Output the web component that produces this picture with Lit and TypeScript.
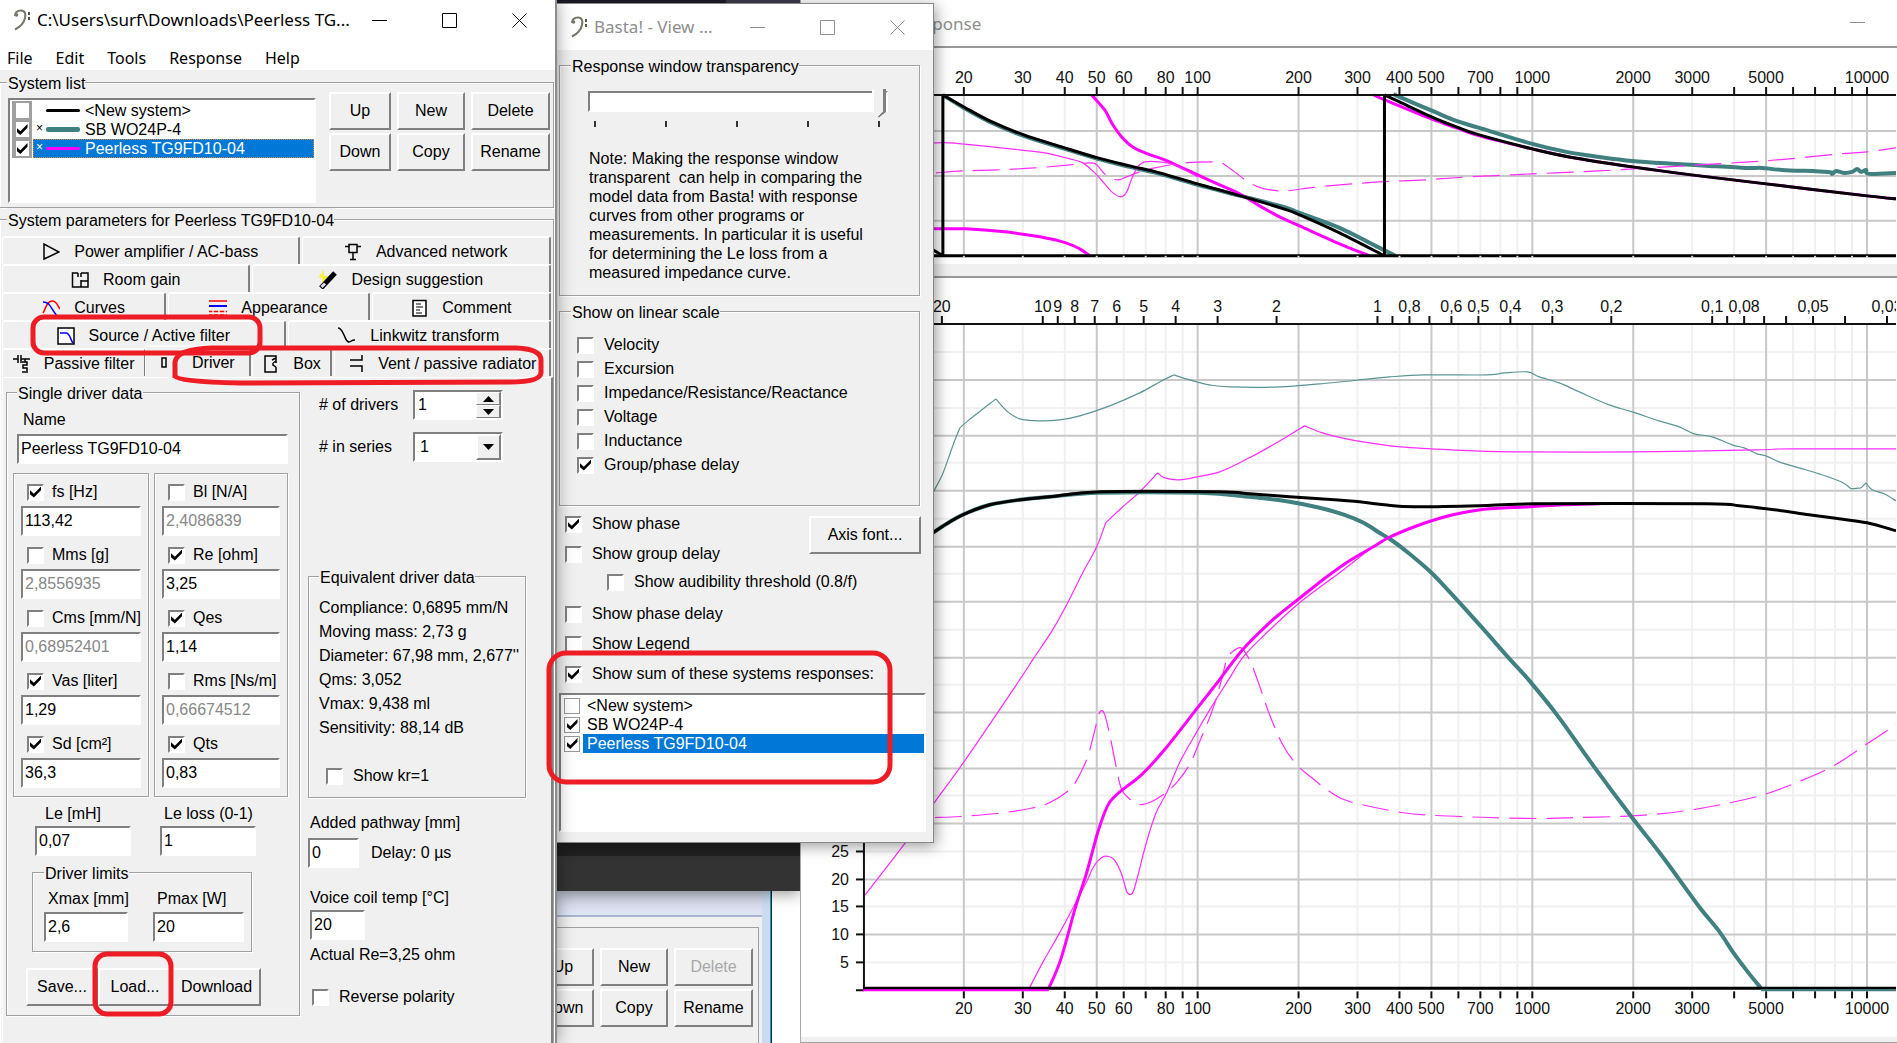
import { LitElement, html, svg, css, nothing } from "lit";
import { customElement } from "lit/decorators.js";
import { classMap } from "lit/directives/class-map.js";

type Pt = [number, number];

/* ---------- chart geometry ---------- */

const DECADE = 335;
const fx = (f: number) => Math.round(1198 + DECADE * Math.log10(f / 100));
const px = (p: number) => Math.round(1043 + DECADE * Math.log10(10 / p));
const MAJOR = [20, 50, 100, 200, 500, 1000, 2000, 5000, 10000];
const MINOR = [30, 40, 60, 70, 80, 90, 300, 400, 600, 700, 800, 900, 3000, 4000, 6000, 7000, 8000, 9000];
const FREQ_LABELS = [20, 30, 40, 50, 60, 80, 100, 200, 300, 400, 500, 700, 1000, 2000, 3000, 5000, 10000];
const PERIODS = [20, 10, 9, 8, 7, 6, 5, 4, 3, 2, 1, 0.9, 0.8, 0.7, 0.6, 0.5, 0.4, 0.3, 0.2, 0.1, 0.09, 0.08, 0.07, 0.06, 0.05, 0.04, 0.03];
const PERIOD_LABELS = [20, 10, 9, 8, 7, 6, 5, 4, 3, 2, 1, 0.8, 0.6, 0.5, 0.4, 0.3, 0.2, 0.1, 0.08, 0.05, 0.03];

/** Smooth path through points; "|" separates pieces that meet in a corner. */
function smooth(data: string): string {
  return data
    .split("|")
    .map((part) => {
      const p = part.trim().split(/\s+/).map((s) => s.split(",").map(Number) as Pt);
      let d = `M${p[0][0]} ${p[0][1]}`;
      for (let i = 0; i < p.length - 1; i++) {
        const a = p[Math.max(0, i - 1)];
        const b = p[i];
        const c = p[i + 1];
        const e = p[Math.min(p.length - 1, i + 2)];
        d += `C${b[0] + (c[0] - a[0]) / 6} ${b[1] + (c[1] - a[1]) / 6} ${c[0] - (e[0] - b[0]) / 6} ${c[1] - (e[1] - b[1]) / 6} ${c[0]} ${c[1]}`;
      }
      return d;
    })
    .join("");
}

const PHASE = {
  teal: "943,95 964,108 990,122 1024,136 1062,148 1098,159 1130,167 1160,174 1198,185 1241,196 1284,207 1300,213 1340,228 1370,243 1396,256|1394,94 1400,97 1433,111 1457,121 1480,128 1533,144 1567,152 1600,157 1633,161 1677,164 1710,166 1747,168 1763,168 1783,170 1829,172 1833,174 1837,171 1845,173 1853,172 1858,169 1862,172 1867,170 1870,174 1897,173",
  magenta: "1092,95 1105,110 1112,123 1122,137 1133,147 1148,154 1165,160 1185,169 1198,175 1220,185 1240,194 1260,206 1280,217 1300,226 1340,244 1370,256|933,229 966,229 1005,232 1040,237 1066,243 1080,249 1090,256|1374,95 1400,106 1432,119 1457,128 1480,136 1533,149 1570,157 1633,167 1692,175 1767,184 1868,196 1897,199",
  black: "943,95 964,107 990,121 1024,135 1062,147 1098,158 1130,166 1160,173 1198,184 1241,196 1284,209 1300,215 1340,233 1385,256|1385,95 1400,102 1432,117 1457,127 1480,135 1533,149 1570,157 1633,167 1692,175 1767,184 1868,196 1897,199|933,250 943,256",
  solid: "933,143 950,143 983,146 1020,150 1045,153 1070,159 1083,163 1095,173 1105,184 1112,192 1121,197 1127,192 1132,179 1138,167 1145,162 1160,162 1175,165 1198,177",
  dashed: "936,173 963,171 997,170 1035,168 1070,165 1090,163 1097,165 1106,175 1118,180 1127,177 1140,172 1155,168 1185,163 1213,162 1222,163 1235,172 1250,183 1265,189 1285,191 1310,188 1340,185 1380,182 1425,180 1470,177 1533,174 1600,171 1650,168 1700,165 1750,162 1790,159 1840,154 1868,152 1897,148",
};

const RESPONSE = {
  tealThin: "933,493 942,476 948,460 954,443 960,428|960,428 968,421 996,399|996,399 1008,412 1020,419 1038,421 1060,420 1080,416 1110,406 1140,393 1160,382 1174,375|1174,375 1190,380 1210,385 1230,387 1280,387 1320,384 1370,379 1390,377 1425,375 1488,375 1505,373 1528,372 1540,377 1560,383 1580,392 1610,405 1633,412 1660,421 1680,427 1695,434 1713,437 1733,445 1745,448 1758,454 1767,456 1780,462 1800,468 1820,474 1842,482 1852,489|1852,489 1862,488|1862,488 1867,483|1867,483 1873,490 1885,494 1897,501",
  magentaTop: "864,897 905,844 933,805 965,761 1020,680 1033,660 1053,630 1068,603 1083,573 1097,547 1106,523|1106,523 1122,508 1140,492 1158,473|1158,473 1165,478 1180,480 1198,477 1220,472 1242,462 1277,443 1305,426|1305,426 1323,433 1347,439 1370,443 1401,447 1452,450 1511,452 1634,452 1757,450 1790,449 1897,449",
  dip: "1030,988 1043,963 1059,935 1074,907 1087,882 1094,867 1102,858 1109,857 1115,861 1122,875 1127,892 1131,895 1134,891 1139,873 1144,853 1150,832 1157,812 1167,793 1180,763 1191,743 1209,712 1229,680 1243,658 1262,638 1300,603 1340,573 1372,548",
  dashed: "935,818 960,817 997,814 1030,809 1050,803 1070,790 1080,775 1088,757 1094,735 1099,715 1102,711 1105,715 1110,735 1116,765 1122,790 1132,801 1140,805 1150,803 1165,794 1177,783 1190,765 1200,742 1213,710 1222,680 1227,660 1233,652 1241,648 1247,655 1253,667 1262,692 1270,715 1283,745 1297,765 1312,778 1330,792 1350,802 1402,813 1437,816 1490,818 1542,819 1577,818 1619,817 1653,815 1688,811 1727,804 1765,795 1800,782 1835,766 1870,743 1897,725",
  teal: "933,533 950,522 965,514 990,505 1020,500 1050,497 1100,493 1200,493 1250,497 1290,502 1320,508 1345,515 1364,523 1380,533 1393,541 1410,554 1432,573 1450,592 1480,625 1510,659 1530,681 1559,717 1594,766 1632,817 1664,858 1699,906 1720,932 1734,953 1749,973 1762,989",
  magenta: "1049,989 1061,960 1076,907 1087,873 1098,833 1107,808 1113,799 1123,790 1142,775 1165,750 1198,708 1220,680 1243,650 1270,623 1283,612 1317,585 1330,575 1350,561 1374,547 1389,538 1415,527 1442,518 1463,513 1490,509 1531,507 1564,505 1600,504",
  black: "933,533 950,522 965,514 990,505 1020,500 1050,497 1100,492 1220,492 1250,494 1290,497 1320,499 1360,502 1385,505 1415,507 1480,506 1535,504 1708,504 1740,506 1775,510 1810,515 1840,519 1868,523 1897,531",
};

const range = (a: number, b: number) => Array.from({ length: b - a + 1 }, (_, i) => a + i);

const verticals = (y1: number, y2: number) => svg`
  ${MINOR.map((f) => svg`<path class="minor" d="M${fx(f)} ${y1}V${y2}"/>`)}
  ${MAJOR.map((f) => svg`<path class="major" d="M${fx(f)} ${y1}V${y2}"/>`)}`;

const phaseChart = () => html`<svg class="chart" viewBox="800 48 1097 216" preserveAspectRatio="xMinYMin slice" role="img" aria-label="Phase">
  ${verticals(95, 256)}
  ${[131, 176, 221].map((y) => svg`<path class="major" d="M864 ${y}H1897"/>`)}
  <path class="c-teal" d=${smooth(PHASE.teal)}></path>
  <path class="c-magenta" d=${smooth(PHASE.magenta)}></path>
  <path class="c-thin" d=${smooth(PHASE.solid)}></path>
  <path class="c-thin dash" d=${smooth(PHASE.dashed)}></path>
  <path class="c-black" d="${smooth(PHASE.black)}M943 95V256M1385 95V256"></path>
  <path class="axis" d="M864 95H1897"></path>
  <path class="base" d="M864 256H1897"></path>
  ${[...MINOR, ...MAJOR].map((f) => svg`<path class="axis" d="M${fx(f)} 87V95"/><path class="notch" d="M${fx(f)} 256V258"/>`)}
  ${FREQ_LABELS.map((f) => svg`<text x=${fx(f)} y="83">${f}</text>`)}
</svg>`;

const responseChart = () => html`<svg class="chart" viewBox="800 278 1097 760" preserveAspectRatio="xMinYMin slice" role="img" aria-label="Response">
  ${range(1, 23).filter((n) => n % 2).map((n) => svg`<path class="minor" d="M864 ${Math.round(990.5 - 27.75 * n)}H1897"/>`)}
  ${verticals(325, 989)}
  ${range(1, 22).filter((n) => n % 2 === 0).map((n) => svg`<path class="major" d="M864 ${Math.round(990.5 - 27.75 * n)}H1897"/>`)}
  <path class="c-thin-teal" d=${smooth(RESPONSE.tealThin)}></path>
  <path class="c-thin" d=${smooth(RESPONSE.magentaTop)}></path>
  <path class="c-thin" d=${smooth(RESPONSE.dip)}></path>
  <path class="c-thin dash" d=${smooth(RESPONSE.dashed)}></path>
  <path class="c-teal" d=${smooth(RESPONSE.teal)}></path>
  <path class="c-magenta" d=${smooth(RESPONSE.magenta)}></path>
  <path class="c-black" d=${smooth(RESPONSE.black)}></path>
  <path class="axis" d="M864 324H1897M864 324V991M856 991H864"></path>
  <path class="base" d="M863 989H1897"></path>
  <path class="under-magenta" d="M863 991H1049"></path>
  <path class="under-teal" d="M1762 991H1897"></path>
  ${PERIODS.map((p) => svg`<path class="axis" d="M${px(p)} 316V324"/>`)}
  ${PERIOD_LABELS.map((p) => svg`<text x=${px(p)} y="312">${String(p).replace(".", ",")}</text>`)}
  ${[...MINOR, ...MAJOR].map((f) => svg`<path class="axis" d="M${fx(f)} 992V999"/>`)}
  ${FREQ_LABELS.map((f) => svg`<text x=${fx(f)} y="1015">${f}</text>`)}
  ${[5, 10, 15, 20, 25].map((v) => {
    const y = Math.round(990.5 - 5.55 * v);
    return svg`<path class="axis" d="M856 ${y}H864"/><text class="end" x="849" y=${y + 6}>${v}</text>`;
  })}
</svg>`;

/* ---------- icons ---------- */

const clef = html`<svg class="clef" viewBox="0 0 18 22" aria-hidden="true">
  <path d="M2 7C2 3 5 1.500 8 1.500C12 1.500 13 5 12 9C11 14 7 18 2 20.500" fill="none" stroke="#77776a" stroke-width="2"/>
  <circle cx="3.500" cy="6" r="1.800" fill="#77776a"/>
  <path d="M15 3h2v3h-2zM15 8h2v3h-2z" fill="#55554a"/>
</svg>`;

const icons: Record<string, unknown> = {
  amp: svg`<path d="M2 1V16L17 9Z" fill="none" stroke="#000" stroke-width="1.500"/>`,
  network: svg`<path d="M5 1.500H13V9.500H5ZM1 3.500H5M13 3.500H17M9 9V16M6 16.500H12" fill="none" stroke="#000" stroke-width="1.500"/>`,
  room: svg`<path d="M7 2H1.500V16H17V12M7 2V6M10 2H17V8M10 2V6M10 9V16M10 10H17M17 8V12" fill="none" stroke="#000" stroke-width="1.500"/>`,
  wand: svg`<path d="M4 0V11M0 6H9M1 3L7 9" stroke="#ffee20" stroke-width="1.500"/><path d="M2 17L16 2" stroke="#000" stroke-width="5"/><path d="M2.500 16L6 12.500" stroke="#ddd" stroke-width="3"/>`,
  curves: svg`<path d="M1 14C4 9 5 2 10 2C15 2 15 6 18 10" fill="none" stroke="#f00" stroke-width="1.500"/><path d="M1 3C8 3 8 8 15 17" fill="none" stroke="#00f" stroke-width="1.500"/>`,
  lines: svg`<path d="M0 2H18M0 12.500H18M0 16H18" stroke="#f00" stroke-width="1.500"/><path d="M4 11V18M10 11V18M16 11V18" stroke="#f0f0f0" stroke-width="1.500"/><path d="M0 7H18" stroke="#00f" stroke-width="2"/>`,
  comment: svg`<path d="M3 1.500H16V17H3Z" fill="#fff" stroke="#000" stroke-width="1.500"/><path d="M6 5H11M6 8H13M6 11H10M6 14H12" stroke="#000"/>`,
  filter: svg`<path d="M1 1H17V17H1Z" fill="#fff" stroke="#000" stroke-width="1.500"/><path d="M3 6H9C13 6 13 12 16 16" fill="none" stroke="#00f" stroke-width="1.500"/>`,
  linkwitz: svg`<path d="M0 1C3 1 4 4 6 8C8 12 8 15 11 15C13 15 13 13 17 13" fill="none" stroke="#000" stroke-width="1.500"/>`,
  passive: svg`<path d="M0 4H5M5 0V8M8 0V8M8 4H17M12 4V7M9 7H14V10H10V13H14V16M9 17H15" fill="none" stroke="#000" stroke-width="1.500"/>`,
  driver: svg`<path d="M1 4H5V13H1Z" fill="none" stroke="#000" stroke-width="1.500"/>`,
  box: svg`<path d="M14 8V1H3V17H14V12M14 3L10 5M14 6L11 8M11 8V10L14 12" fill="none" stroke="#000" stroke-width="1.500"/>`,
  vent: svg`<path d="M3 5H15V0M3 11H15V17" fill="none" stroke="#000" stroke-width="1.500"/>`,
};
const icon = (name: string) => html`<svg class="ico" viewBox="0 0 18 18" aria-hidden="true">${icons[name]}</svg>`;

const controls = () => html`<div class="controls">
  <button aria-label="Minimize"><svg viewBox="0 0 16 16"><path d="M0 8.500H15"/></svg></button>
  <button aria-label="Maximize"><svg viewBox="0 0 16 16"><path d="M.5 1.500H14.500V15.500H.5Z"/></svg></button>
  <button aria-label="Close"><svg viewBox="0 0 16 16"><path d="M.5 1.500L14.500 15.500M14.500 1.500L.5 15.500"/></svg></button>
</div>`;

/* ---------- data ---------- */

interface TabDef { icon: string; label: string; active?: boolean }
const TABS: { cls: string; tabs: TabDef[] }[] = [
  { cls: "r1", tabs: [{ icon: "amp", label: "Power amplifier / AC-bass" }, { icon: "network", label: "Advanced network" }] },
  { cls: "r2", tabs: [{ icon: "room", label: "Room gain" }, { icon: "wand", label: "Design suggestion" }] },
  { cls: "r3", tabs: [{ icon: "curves", label: "Curves" }, { icon: "lines", label: "Appearance" }, { icon: "comment", label: "Comment" }] },
  { cls: "r4", tabs: [{ icon: "filter", label: "Source / Active filter" }, { icon: "linkwitz", label: "Linkwitz transform" }] },
  { cls: "r5", tabs: [{ icon: "passive", label: "Passive filter" }, { icon: "driver", label: "Driver", active: true }, { icon: "box", label: "Box" }, { icon: "vent", label: "Vent / passive radiator" }] },
];

type Param = [label: string, value: string, on: boolean];
const LEFT: Param[] = [
  ["fs [Hz]", "113,42", true],
  ["Mms [g]", "2,8556935", false],
  ["Cms [mm/N]", "0,68952401", false],
  ["Vas [liter]", "1,29", true],
  ["Sd [cm²]", "36,3", true],
];
const RIGHT: Param[] = [
  ["Bl [N/A]", "2,4086839", false],
  ["Re [ohm]", "3,25", true],
  ["Qes", "1,14", true],
  ["Rms [Ns/m]", "0,66674512", false],
  ["Qts", "0,83", true],
];
const SYSTEMS = [
  { name: "<New system>", on: false, star: false, line: "k" },
  { name: "SB WO24P-4", on: true, star: true, line: "t" },
  { name: "Peerless TG9FD10-04", on: true, star: true, line: "m" },
];

const check = (label: string, on = false, cls = "") => html`<label class="check ${cls}"><input type="checkbox" .checked=${on} />${label}</label>`;

const params = (list: Param[]) => html`<div class="params">
  ${list.map(([label, value, on]) => html`<div class="param">
    ${check(label, on)}
    <input class="field" aria-label="${label} value" .value=${value} ?disabled=${!on} />
  </div>`)}
</div>`;

const field = (label: string, value: string, cls = "") => html`<label class="stack ${cls}"><span>${label}</span><input class="field" .value=${value} /></label>`;

@customElement("app-root")
export class AppRoot extends LitElement {
  static styles = css`
    :host { display: block; position: relative; min-height: 100vh; overflow: hidden; background: #fff; color: #000;
      font: 16px/20px "Liberation Sans", Arial, sans-serif; }
    * { box-sizing: border-box; }
    button, input, select { font: inherit; color: inherit; margin: 0; }
    button { padding: 0; }
    fieldset { margin: 0; padding: 0; min-width: 0; border: 1px solid #a0a0a0; box-shadow: 1px 1px 0 #fff, inset 1px 1px 0 #fff; }
    legend { padding: 3px 0 0 1px; background: #f0f0f0; line-height: 20px; }
    .win { position: absolute; background: #f0f0f0; display: flex; flex-direction: column; }

    .bar { display: flex; align-items: center; background: #fff; font: 17px/24px "Noto Sans", "Open Sans", sans-serif; flex: none; }
    .bar h1 { font: inherit; margin: 0 0 0 6px; flex: 1; white-space: nowrap; min-width: 0; }
    .clef { width: 18px; height: 22px; margin-left: 13px; flex: none; }
    .controls { display: flex; flex: none; align-self: stretch; }
    .controls button { width: 70px; border: 0; background: none; display: grid; place-items: center; }
    .controls svg { width: 16px; height: 16px; fill: none; stroke: currentColor; }

    .push { background: #f0f0f0; border: 2px solid; border-color: #fff #808080 #808080 #fff; }
    .push:disabled { color: #a8a8a8; }
    .check { display: flex; align-items: center; gap: 10px; white-space: nowrap; }
    .check input, .tick { appearance: none; width: 17px; height: 17px; flex: none; background: #fff; display: grid; place-items: center;
      border: 2px solid; border-color: #808080 #fff #fff #808080; }
    .check input:checked::before, .tick:checked::before { content: ""; width: 11px; height: 11px; background: #000;
      clip-path: polygon(0 35%, 35% 65%, 100% 0, 100% 35%, 35% 100%, 0 70%); }
    .field { width: 100%; height: 30px; background: #fff; border: 2px solid; border-color: #808080 #fff #fff #808080; border-radius: 0; padding: 0 2px 1px; outline: 0; min-width: 0; }
    .field:disabled { color: #888; }
    .list { background: #fff; border: 2px solid; border-color: #808080 #fff #fff #808080; margin: 0; padding: 0; list-style: none; }

    /* main window */
    .main { left: 0; top: 0; bottom: 0; width: 557px; z-index: 3; border-right: 2px solid #8c8c8c; box-shadow: 0 0 16px rgba(0, 0, 0, 0.4); }
    .main .bar { height: 39px; }
    .menu { display: flex; gap: 23px; height: 31px; padding: 7px 7px 0; background: #fff; font: 16px/24px "Noto Sans", "Open Sans", sans-serif; align-items: center; }
    .menu button { border: 0; background: none; }
    .sys { margin: 1px 1px 0 0; border-left: 0; padding-bottom: 4px; }
    .sys legend, .par legend.top { margin-left: 7px; }
    .sys-in { display: flex; align-items: flex-start; justify-content: space-between; padding: 0 3px 0 8px; }
    .sys-in .list { width: 308px; min-height: 105px; margin-top: 4px; padding: 1px 0 0 2px; }
    .sys-row { display: flex; height: 19px; }
    .sys-row .cell { width: 20px; background: #a0a0a0; display: grid; place-items: center; flex: none; }
    .cell .tick { width: 13px; height: 15px; border: 0; }
    .sys-row .body { flex: 1; display: flex; align-items: center; margin-left: 1px; padding-left: 2px; border: 1px solid transparent; line-height: 17px; }
    .sys-row .star { width: 9px; align-self: flex-start; font-size: 12px; line-height: 14px; }
    .swatch { width: 34px; height: 3px; margin: 0 5px 0 1px; border-radius: 2px; background: #000; }
    .swatch.t { height: 5px; background: #408080; }
    .swatch.m { background: #f0f; }
    .sel { background: #0078d7; color: #fff; }
    .sys-row .body.sel { border: 1px dotted #d58a3c; }
    .btns { display: grid; grid-template-columns: 62px 68px 79px; grid-auto-rows: 38px; gap: 3px 6px; }
    .sys-in .btns { margin-top: -2px; }

    .par { flex: 1; margin-right: 1px; border-left: 0; border-bottom: 0; }
    .par-in { padding: 5px 0 0 2px; }
    .tabs { display: grid; grid-auto-rows: 28px; padding-right: 2px; }
    .trow { display: grid; gap: 2px; }
    .r1 { grid-template-columns: 297fr 249fr; }
    .r2 { grid-template-columns: 248fr 298fr; }
    .r3 { grid-template-columns: 164fr 201fr 179fr; }
    .r4 { grid-template-columns: 283fr 263fr; }
    .r5 { grid-template-columns: 144fr 102fr 79fr 217fr; }
    .tab { display: flex; align-items: center; justify-content: center; gap: 14px; background: #f0f0f0; border: 0 solid; border-width: 2px 2px 0 1px;
      border-color: #fff #808080 #fff #fff; border-radius: 3px 3px 0 0; white-space: nowrap; min-width: 0; padding-top: 2px; }
    .tab.active { margin: -3px -1px 0 -3px; padding-top: 2px; border-top-color: #f8f8f8; }
    .ico { width: 18px; height: 18px; flex: none; }
    .r5 .tab { gap: 13px; }
    .page { margin-top: 1px; border-top: 1px solid #fff; border-left: 1px solid #fff; border-right: 2px solid #808080; display: flex; gap: 8px; padding: 3px 0 30px 3px; }
    .single { width: 294px; flex: none; padding-bottom: 9px; }
    .single > legend { margin-left: 10px; }
    .single-in { padding: 6px 11px 0 6px; }
    .name { padding: 0 0 0 4px; }
    .stack { display: flex; flex-direction: column; }
    .name span { margin: 0 0 4px 6px; }
    .cols { display: grid; grid-template-columns: 136px 134px; gap: 5px; margin-top: 9px; }
    .params { border: 1px solid #a0a0a0; box-shadow: 1px 1px 0 #fff, inset 1px 1px 0 #fff; display: flex; flex-direction: column; gap: 9px; padding: 8px 7px; }
    .param { display: flex; flex-direction: column; gap: 4px; }
    .param .check { height: 20px; padding-left: 6px; gap: 8px; margin-right: -7px; }
    .pair { display: grid; grid-template-columns: 96px 96px; gap: 29px; margin: 7px 0 0 22px; }
    .pair span { padding-left: 4px; margin-bottom: 2px; white-space: nowrap; }
    .pair .stack:first-child span { padding-left: 10px; }
    .limits { margin: 5px 36px 0 19px; padding: 5px 10px 9px 11px; }
    .limits-in { display: grid; grid-template-columns: 84px 91px; gap: 25px; }
    .limits span { padding-left: 4px; margin-bottom: 3px; white-space: nowrap; }
    .acts { display: flex; margin: 16px 0 0 13px; }
    .acts .push { height: 38px; width: 72px; }
    .acts .push:nth-child(2) { width: 74px; }
    .acts .push:nth-child(3) { width: 89px; }

    .side { flex: 1; display: flex; flex-direction: column; padding-top: 9px; min-width: 0; }
    .nums { display: grid; grid-template-columns: 94px 90px; grid-auto-rows: 30px; row-gap: 12px; align-items: center; padding-left: 11px; }
    .combo { display: grid; grid-template-columns: 1fr 25px; background: #fff; border: 2px solid; border-color: #808080 #fff #fff #808080; height: 30px; }
    .combo input, .combo select { border: 0; outline: 0; background: none; width: 100%; min-width: 0; padding: 0 3px; appearance: none; }
    .combo select { grid-area: 1 / 1 / 2 / 3; padding: 0 5px; }
    .combo .drop { grid-area: 1 / 2; pointer-events: none; display: grid; place-items: center; }
    .spin { display: grid; grid-template-rows: 1fr 1fr; }
    .spin button { display: grid; place-items: center; border-width: 1px 2px 1px 1px; }
    .arr { width: 11px; height: 6px; }
    .equiv { width: 218px; margin-top: 103px; padding-bottom: 11px; }
    .equiv legend { margin-left: 10px; }
    .equiv p { margin: 0 0 0 10px; line-height: 24px; white-space: nowrap; }
    .equiv .lines { padding-top: 8px; }
    .equiv .check { margin: 26px 0 0 17px; }
    .side .lab { margin: 15px 0 5px 2px; display: block; }
    .row { display: flex; align-items: center; gap: 12px; }
    .row .field { width: 51px; }
    .side .lab.second { margin: 20px 0 2px 2px; }
    .temp { width: 55px; margin-left: 2px; }
    .side .actual { margin: 5px 0 22px 2px; }
    .side > .check { padding-left: 4px; }

    /* view window */
    .view { left: 557px; top: 3px; width: 377px; z-index: 2; border: 1px solid #888; border-left: 0; box-shadow: 2px 3px 14px rgba(0, 0, 0, 0.4); padding-bottom: 10px; }
    .view .bar, .response .bar { color: #8e8e8e; }
    .view .bar { height: 46px; }
    .view-in { padding: 4px 8px 0 2px; }
    .view-in fieldset { width: 361px; }
    .view-in legend { margin-left: 11px; }
    .trans { padding-bottom: 13px; }
    .trans-in { padding: 9px 31px 0 28px; }
    .slider { appearance: none; width: 100%; height: 30px; margin: 0; display: block; background: none; }
    .slider::-webkit-slider-runnable-track { height: 21px; background: #fff; border: 2px solid; border-color: #808080 #fff #fff #808080; }
    .slider::-webkit-slider-thumb { appearance: none; width: 14px; height: 29px; margin-top: -4px;
      background: linear-gradient(139deg, transparent 79%, #808080 79%), linear-gradient(90deg, #fff 2px, #f0f0f0 2px 11px, #808080 11px);
      clip-path: polygon(0 0, 100% 0, 100% 80%, 50% 100%, 0 80%); }
    .marks { display: flex; justify-content: space-between; padding: 5px 8px 0 6px; height: 11px; }
    .marks i { width: 2px; background: #333; }
    .note { margin: 22px -20px 0 1px; line-height: 19px; }
    .note p { margin: 0; white-space: pre; }
    .linear { margin-top: 4px; padding-bottom: 28px; }
    .linear-in { padding: 10px 0 0 17px; }
    .linear .check { height: 24px; }
    .opts { display: grid; grid-template-columns: 1fr 112px; grid-auto-rows: 30px; margin-top: 3px; padding: 0 4px 0 6px; }
    .opts .check { grid-column: 1 / -1; }
    .opts .check.short { grid-column: 1; }
    .opts .indent { padding-left: 42px; height: 26px; }
    .opts .push { grid-area: 1 / 2 / 3 / 3; margin-top: 7px; height: 38px; }
    .view .list { margin: 4px -1px 0 0; min-height: 139px; padding: 1px 0 0 3px; }
    .view .list label { display: flex; gap: 3px; height: 19px; align-items: center; }
    .view .list span { flex: 1; padding-left: 4px; line-height: 19px; }
    .view .list .tick { border: 1px solid #999; width: 16px; height: 16px; }

    /* desktop behind */
    .strip { position: absolute; left: 556px; top: 0; width: 244px; height: 4px; background: linear-gradient(90deg, #1b1c27 170px, #3d3d4b 170px); }
    .dark { position: absolute; left: 556px; top: 830px; width: 244px; height: 61px; background: linear-gradient(#212121 26px, #333 26px); box-shadow: 0 3px 14px rgba(0, 0, 0, 0.4); z-index: 1; }
    .back { left: 500px; top: 860px; bottom: 0; width: 270px; border: solid #c9dcf0; border-width: 0 8px 0 0; box-shadow: 1px 0 0 #0aa5c8, 2px 0 0 #222; }
    .back .cap { height: 57px; background: linear-gradient(#d0d4e4 31px, #dfe5f5); border-bottom: 2px solid #a9b4d0; flex: none; }
    .back .panel { margin: 10px 3px 0 0; flex: 1; border: 1px solid #a0a0a0; border-width: 1px 1px 0 0; padding: 20px 5px 0 0; display: flex; justify-content: flex-end; }
    .back .btns { grid-template-columns: 62px 68px 79px; align-content: start; }

    /* response window */
    .response { left: 800px; right: 0; top: 0; bottom: 0; background: #fff; z-index: 1; border-left: 1px solid #aaa; }
    .desk { z-index: 0; }
    .response .bar { height: 46px; padding: 2px 19px 0 103px; justify-content: space-between; }
    .response .bar h1 { margin: 0; }
    .response .bar .mini { border: 0; background: none; width: 40px; display: grid; place-items: center; color: #8e8e8e; }
    .mini svg { width: 16px; height: 16px; stroke: currentColor; }
    .response .rule { border-top: 2px solid #999; }
    .chart { display: block; width: 100%; margin-left: -1px; flex: none; }
    .split { height: 12px; background: #f0f0f0; flex: none; }
    .foot { flex: 1; background: #f0f0f0; border-bottom: 1px solid #a0a0a0; }
    .chart text { font: 16px "Liberation Sans", Arial, sans-serif; text-anchor: middle; fill: #111; }
    .chart text.end { text-anchor: end; }
    .chart path { fill: none; }
    .major { stroke: #c8c8c8; stroke-width: 2; }
    .minor { stroke: #f0f0f0; stroke-width: 2; }
    .axis { stroke: #111; stroke-width: 2; }
    .base { stroke: #000; stroke-width: 3; }
    .notch { stroke: #ddd; stroke-width: 2; }
    .c-teal { stroke: #408080; stroke-width: 4; }
    .c-magenta { stroke: #f0f; stroke-width: 3; }
    .c-black { stroke: #000; stroke-width: 3; }
    .c-thin { stroke: #ff2cff; stroke-width: 1.2; }
    .c-thin-teal { stroke: #5c9494; stroke-width: 1.2; }
    .dash { stroke-dasharray: 27 10; }
    .under-magenta { stroke: #f0f; stroke-width: 2; }
    .under-teal { stroke: #408080; stroke-width: 2; }

    .marksup { position: absolute; inset: 0; width: 100%; height: 100%; z-index: 5; pointer-events: none; fill: none; stroke: #ee1c25; stroke-width: 5; }
  `;

  private mainWindow() {
    return html`<section class="win main">
      <header class="bar">${clef}<h1>C:\\Users\\surf\\Downloads\\Peerless TG...</h1>${controls()}</header>
      <nav class="menu">${["File", "Edit", "Tools", "Response", "Help"].map((m) => html`<button>${m}</button>`)}</nav>
      <fieldset class="sys">
        <legend>System list</legend>
        <div class="sys-in">
          <ul class="list">
            ${SYSTEMS.map((s, i) => html`<li class="sys-row">
              <span class="cell"><input class="tick" type="checkbox" aria-label=${s.name} .checked=${s.on} /></span>
              <span class=${classMap({ body: true, sel: i === 2 })}><span class="star">${s.star ? "×" : nothing}</span><i class="swatch ${s.line}"></i>${s.name}</span>
            </li>`)}
          </ul>
          <div class="btns">${["Up", "New", "Delete", "Down", "Copy", "Rename"].map((b) => html`<button class="push">${b}</button>`)}</div>
        </div>
      </fieldset>
      <fieldset class="par">
        <legend class="top">System parameters for Peerless TG9FD10-04</legend>
        <div class="par-in">
          <div class="tabs" role="tablist">
            ${TABS.map((r) => html`<div class="trow ${r.cls}">
              ${r.tabs.map((t) => html`<button role="tab" aria-selected=${t.active ? "true" : "false"} class=${classMap({ tab: true, active: !!t.active })}>${icon(t.icon)}${t.label}</button>`)}
            </div>`)}
          </div>
          ${this.driverPage()}
        </div>
      </fieldset>
    </section>`;
  }

  private driverPage() {
    return html`<div class="page">
      <fieldset class="single">
        <legend>Single driver data</legend>
        <div class="single-in">
          ${field("Name", "Peerless TG9FD10-04", "name")}
          <div class="cols">${params(LEFT)}${params(RIGHT)}</div>
          <div class="pair">${field("Le [mH]", "0,07")}${field("Le loss (0-1)", "1")}</div>
          <fieldset class="limits">
            <legend>Driver limits</legend>
            <div class="limits-in">${field("Xmax [mm]", "2,6")}${field("Pmax [W]", "20")}</div>
          </fieldset>
          <div class="acts"><button class="push">Save...</button><button class="push">Load...</button><button class="push">Download</button></div>
        </div>
      </fieldset>
      <div class="side">
        <div class="nums">
          <label for="count"># of drivers</label>
          <div class="combo"><input id="count" value="1" />
            <span class="spin">
              <button class="push" aria-label="More"><svg class="arr" viewBox="0 0 11 6"><path d="M0 6H11L5.500 0Z"/></svg></button>
              <button class="push" aria-label="Fewer"><svg class="arr" viewBox="0 0 11 6"><path d="M0 0H11L5.500 6Z"/></svg></button>
            </span>
          </div>
          <label for="series"># in series</label>
          <div class="combo"><select id="series"><option>1</option></select><span class="push drop"><svg class="arr" viewBox="0 0 11 6"><path d="M0 0H11L5.500 6Z"/></svg></span></div>
        </div>
        <fieldset class="equiv">
          <legend>Equivalent driver data</legend>
          <div class="lines">
            ${["Compliance: 0,6895 mm/N", "Moving mass: 2,73 g", "Diameter: 67,98 mm, 2,677''", "Qms: 3,052", "Vmax: 9,438 ml", "Sensitivity: 88,14 dB"].map((t) => html`<p>${t}</p>`)}
          </div>
          ${check("Show kr=1")}
        </fieldset>
        <label class="lab" for="path">Added pathway [mm]</label>
        <div class="row"><input id="path" class="field" value="0" /><span>Delay: 0 µs</span></div>
        <label class="lab second" for="temp">Voice coil temp [°C]</label>
        <input id="temp" class="field temp" value="20" />
        <div class="actual">Actual Re=3,25 ohm</div>
        ${check("Reverse polarity")}
      </div>
    </div>`;
  }

  private viewWindow() {
    const note = [
      "Note: Making the response window",
      "transparent  can help in comparing the",
      "model data from Basta! with response",
      "curves from other programs or",
      "measurements. In particular it is useful",
      "for determining the Le loss from a",
      "measured impedance curve.",
    ];
    return html`<section class="win view">
      <header class="bar">${clef}<h1>Basta! - View ...</h1>${controls()}</header>
      <div class="view-in">
        <fieldset class="trans">
          <legend>Response window transparency</legend>
          <div class="trans-in">
            <input class="slider" type="range" min="0" max="100" value="100" aria-label="Response window transparency" />
            <div class="marks"><i></i><i></i><i></i><i></i><i></i></div>
            <div class="note">${note.map((l) => html`<p>${l}</p>`)}</div>
          </div>
        </fieldset>
        <fieldset class="linear">
          <legend>Show on linear scale</legend>
          <div class="linear-in">
            ${["Velocity", "Excursion", "Impedance/Resistance/Reactance", "Voltage", "Inductance"].map((l) => check(l))}
            ${check("Group/phase delay", true)}
          </div>
        </fieldset>
        <div class="opts">
          ${check("Show phase", true, "short")}
          ${check("Show group delay", false, "short")}
          ${check("Show audibility threshold (0.8/f)", false, "indent")}
          ${check("Show phase delay")}
          ${check("Show Legend")}
          ${check("Show sum of these systems responses:", true)}
          <button class="push">Axis font...</button>
        </div>
        <div class="list">
          ${SYSTEMS.map((s, i) => html`<label><input class="tick" type="checkbox" .checked=${s.on} /><span class=${i === 2 ? "sel" : ""}>${s.name}</span></label>`)}
        </div>
      </div>
    </section>`;
  }

  render() {
    return html`
      <div class="strip"></div>
      <section class="win back desk">
        <div class="cap"></div>
        <div class="panel">
          <div class="btns">
            <button class="push">Up</button><button class="push">New</button><button class="push" disabled>Delete</button>
            <button class="push">Down</button><button class="push">Copy</button><button class="push">Rename</button>
          </div>
        </div>
      </section>
      <div class="dark"></div>
      <section class="win response">
        <header class="bar"><h1>Response</h1><button class="mini" aria-label="Minimize"><svg viewBox="0 0 16 16"><path d="M0 6.500H15"/></svg></button></header>
        <div class="rule"></div>
        ${phaseChart()}
        <div class="split"></div>
        <div class="rule"></div>
        ${responseChart()}
        <div class="foot"></div>
      </section>
      ${this.viewWindow()}
      ${this.mainWindow()}
      <svg class="marksup" aria-hidden="true">
        <rect x="33" y="317" width="227" height="36" rx="11"/>
        <path d="M175 378V362Q177 349 212 348H516Q541 349 541 360V373Q540 382 510 382L240 383Q178 382 175 376"/>
        <rect x="95" y="954" width="76" height="60" rx="12"/>
        <rect x="549" y="653" width="341" height="129" rx="17"/>
      </svg>`;
  }
}
